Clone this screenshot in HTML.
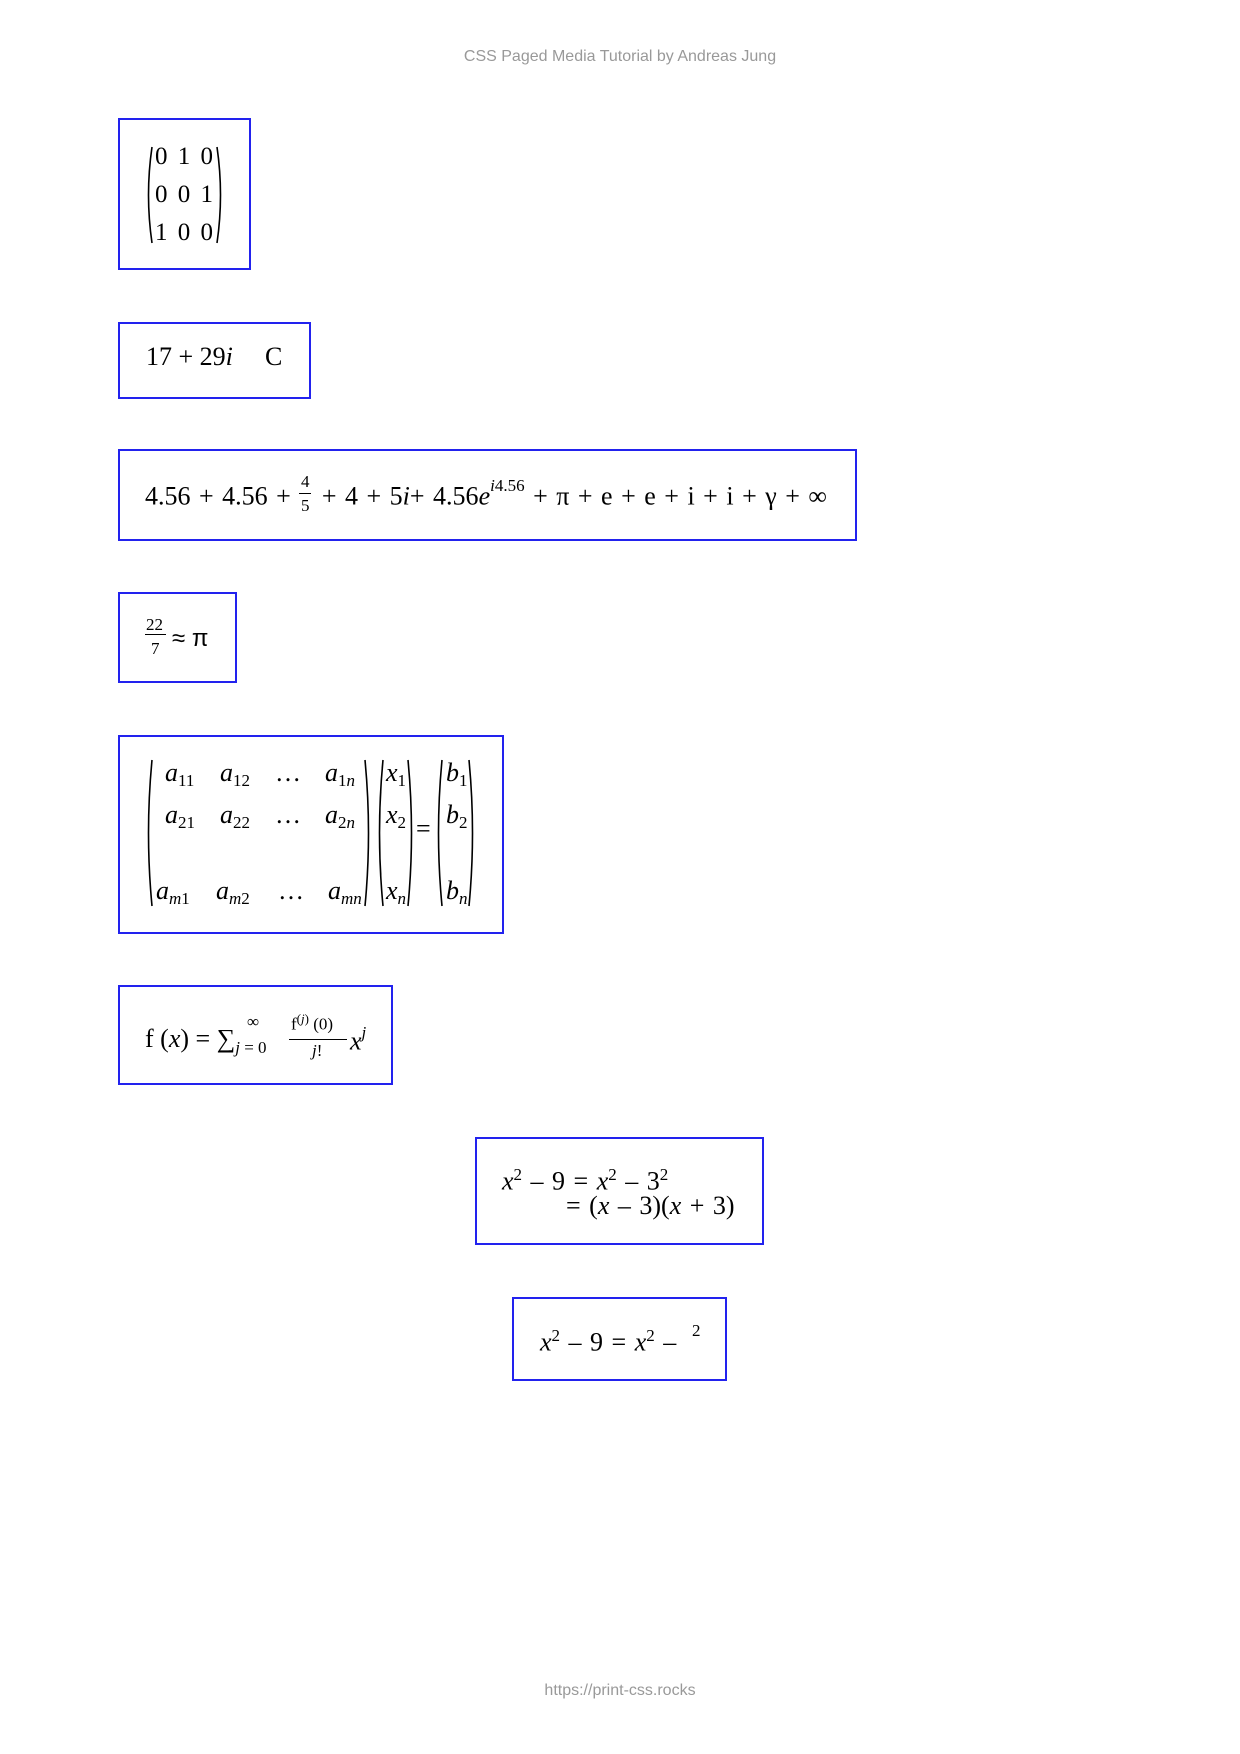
<!DOCTYPE html>
<html><head><meta charset="utf-8"><style>
html,body{margin:0;padding:0;background:#fff;}
body{width:1240px;height:1754px;position:relative;overflow:hidden;font-family:"Liberation Serif",serif;color:#000;}
.b{position:absolute;border:2px solid #2222ee;box-sizing:border-box;}
.t{position:absolute;font-size:26px;line-height:1;white-space:nowrap;}
i{font-style:italic;}
.s{font-size:17px;}
.u{font-size:17px;position:relative;top:5px;}
.hd{position:absolute;left:0;width:1240px;text-align:center;font-family:"Liberation Sans",sans-serif;font-size:16px;color:#999;}
svg.p{position:absolute;overflow:visible;}
svg.p path{stroke:#000;fill:none;stroke-width:1.6;}
</style></head><body>
<div class="hd" style="top:48px">CSS Paged Media Tutorial by Andreas Jung</div>
<div class="hd" style="top:1682px">https://print-css.rocks</div>

<div class="b" style="left:118px;top:118px;width:133px;height:152px"></div>
<svg class="p" style="left:145px;top:147px" width="8" height="96"><path d="M7,0 Q0,48 7,96"/></svg>
<svg class="p" style="left:216px;top:147px" width="8" height="96"><path d="M1,0 Q8,48 1,96"/></svg>
<div class="t" style="left:155px;top:144px;font-size:25px;word-spacing:4px">0 1 0</div>
<div class="t" style="left:155px;top:182px;font-size:25px;word-spacing:4px">0 0 1</div>
<div class="t" style="left:155px;top:220px;font-size:25px;word-spacing:4px">1 0 0</div>

<div class="b" style="left:118px;top:322px;width:193px;height:77px"></div>
<div class="t" style="left:146px;top:344px">17 + 29<i>i</i></div>
<div class="t" style="left:265px;top:344px">C</div>

<div class="b" style="left:118px;top:449px;width:739px;height:92px"></div>
<div class="t" style="left:145px;top:481px;word-spacing:2px">4.56 + 4.56 + <span style="display:inline-block;width:14px"></span> + 4 + 5<i>i</i>+ 4.56<i>e</i><sup class="s" style="position:relative;top:-4px"><i>i</i>4.56</sup> + π + e + e + i + i + γ + ∞</div>
<div class="t s" style="left:301px;top:473px">4</div>
<div class="t s" style="left:301px;top:497px">5</div>
<div style="position:absolute;left:299px;top:493px;width:12px;height:1px;background:#000"></div>

<div class="b" style="left:118px;top:592px;width:119px;height:91px"></div>
<div class="t s" style="left:146px;top:616px">22</div>
<div class="t s" style="left:151px;top:640px">7</div>
<div style="position:absolute;left:145px;top:634px;width:21px;height:1px;background:#000"></div>
<div class="t" style="left:172px;top:627px;font-family:'Liberation Sans',sans-serif;font-size:24px">≈ π</div>

<div class="b" style="left:118px;top:735px;width:386px;height:199px"></div>
<svg class="p" style="left:145px;top:760px" width="8" height="146"><path d="M7,0 Q0,73 7,146"/></svg>
<svg class="p" style="left:364px;top:760px" width="8" height="146"><path d="M1,0 Q8,73 1,146"/></svg>
<svg class="p" style="left:376px;top:760px" width="8" height="146"><path d="M7,0 Q0,73 7,146"/></svg>
<svg class="p" style="left:407px;top:760px" width="8" height="146"><path d="M1,0 Q8,73 1,146"/></svg>
<svg class="p" style="left:435px;top:760px" width="8" height="146"><path d="M7,0 Q0,73 7,146"/></svg>
<svg class="p" style="left:468px;top:760px" width="8" height="146"><path d="M1,0 Q8,73 1,146"/></svg>
<div class="t" style="left:165px;top:760px"><i>a</i><span class="u">11</span></div>
<div class="t" style="left:220px;top:760px"><i>a</i><span class="u">12</span></div>
<div class="t" style="left:275px;top:760px">…</div>
<div class="t" style="left:325px;top:760px"><i>a</i><span class="u">1<i>n</i></span></div>
<div class="t" style="left:165px;top:802px"><i>a</i><span class="u">21</span></div>
<div class="t" style="left:220px;top:802px"><i>a</i><span class="u">22</span></div>
<div class="t" style="left:275px;top:802px">…</div>
<div class="t" style="left:325px;top:802px"><i>a</i><span class="u">2<i>n</i></span></div>
<div class="t" style="left:156px;top:878px"><i>a</i><span class="u"><i>m</i>1</span></div>
<div class="t" style="left:216px;top:878px"><i>a</i><span class="u"><i>m</i>2</span></div>
<div class="t" style="left:278px;top:878px">…</div>
<div class="t" style="left:328px;top:878px"><i>a</i><span class="u"><i>mn</i></span></div>
<div class="t" style="left:386px;top:760px"><i>x</i><span class="u">1</span></div>
<div class="t" style="left:386px;top:802px"><i>x</i><span class="u">2</span></div>
<div class="t" style="left:386px;top:878px"><i>x</i><span class="u"><i>n</i></span></div>
<div class="t" style="left:416px;top:816px">=</div>
<div class="t" style="left:446px;top:760px"><i>b</i><span class="u">1</span></div>
<div class="t" style="left:446px;top:802px"><i>b</i><span class="u">2</span></div>
<div class="t" style="left:446px;top:878px"><i>b</i><span class="u"><i>n</i></span></div>

<div class="b" style="left:118px;top:985px;width:275px;height:100px"></div>
<div class="t" style="left:145px;top:1026px">f (<i>x</i>) = ∑<span class="s" style="position:relative;top:6px"><i>j</i> = 0</span></div>
<div class="t s" style="left:247px;top:1013px">∞</div>
<div class="t s" style="left:291px;top:1012px">f<sup style="font-size:13px">(<i>j</i>)</sup> (0)</div>
<div style="position:absolute;left:289px;top:1039px;width:58px;height:1px;background:#000"></div>
<div class="t s" style="left:312px;top:1042px"><i>j</i>!</div>
<div class="t" style="left:350px;top:1026px"><i>x</i><sup class="s" style="position:relative;top:-2px"><i>j</i></sup></div>

<div class="b" style="left:475px;top:1137px;width:289px;height:108px"></div>
<div class="t" style="left:502px;top:1166px;word-spacing:2px"><i>x</i><sup class="s">2</sup> – 9 = <i>x</i><sup class="s">2</sup> – 3<sup class="s">2</sup></div>
<div class="t" style="left:566px;top:1193px;word-spacing:2px">= (<i>x</i> – 3)(<i>x</i> + 3)</div>

<div class="b" style="left:512px;top:1297px;width:215px;height:84px"></div>
<div class="t" style="left:540px;top:1327px;word-spacing:2px"><i>x</i><sup class="s">2</sup> – 9 = <i>x</i><sup class="s">2</sup> –</div>
<div class="t s" style="left:692px;top:1322px">2</div>
</body></html>
